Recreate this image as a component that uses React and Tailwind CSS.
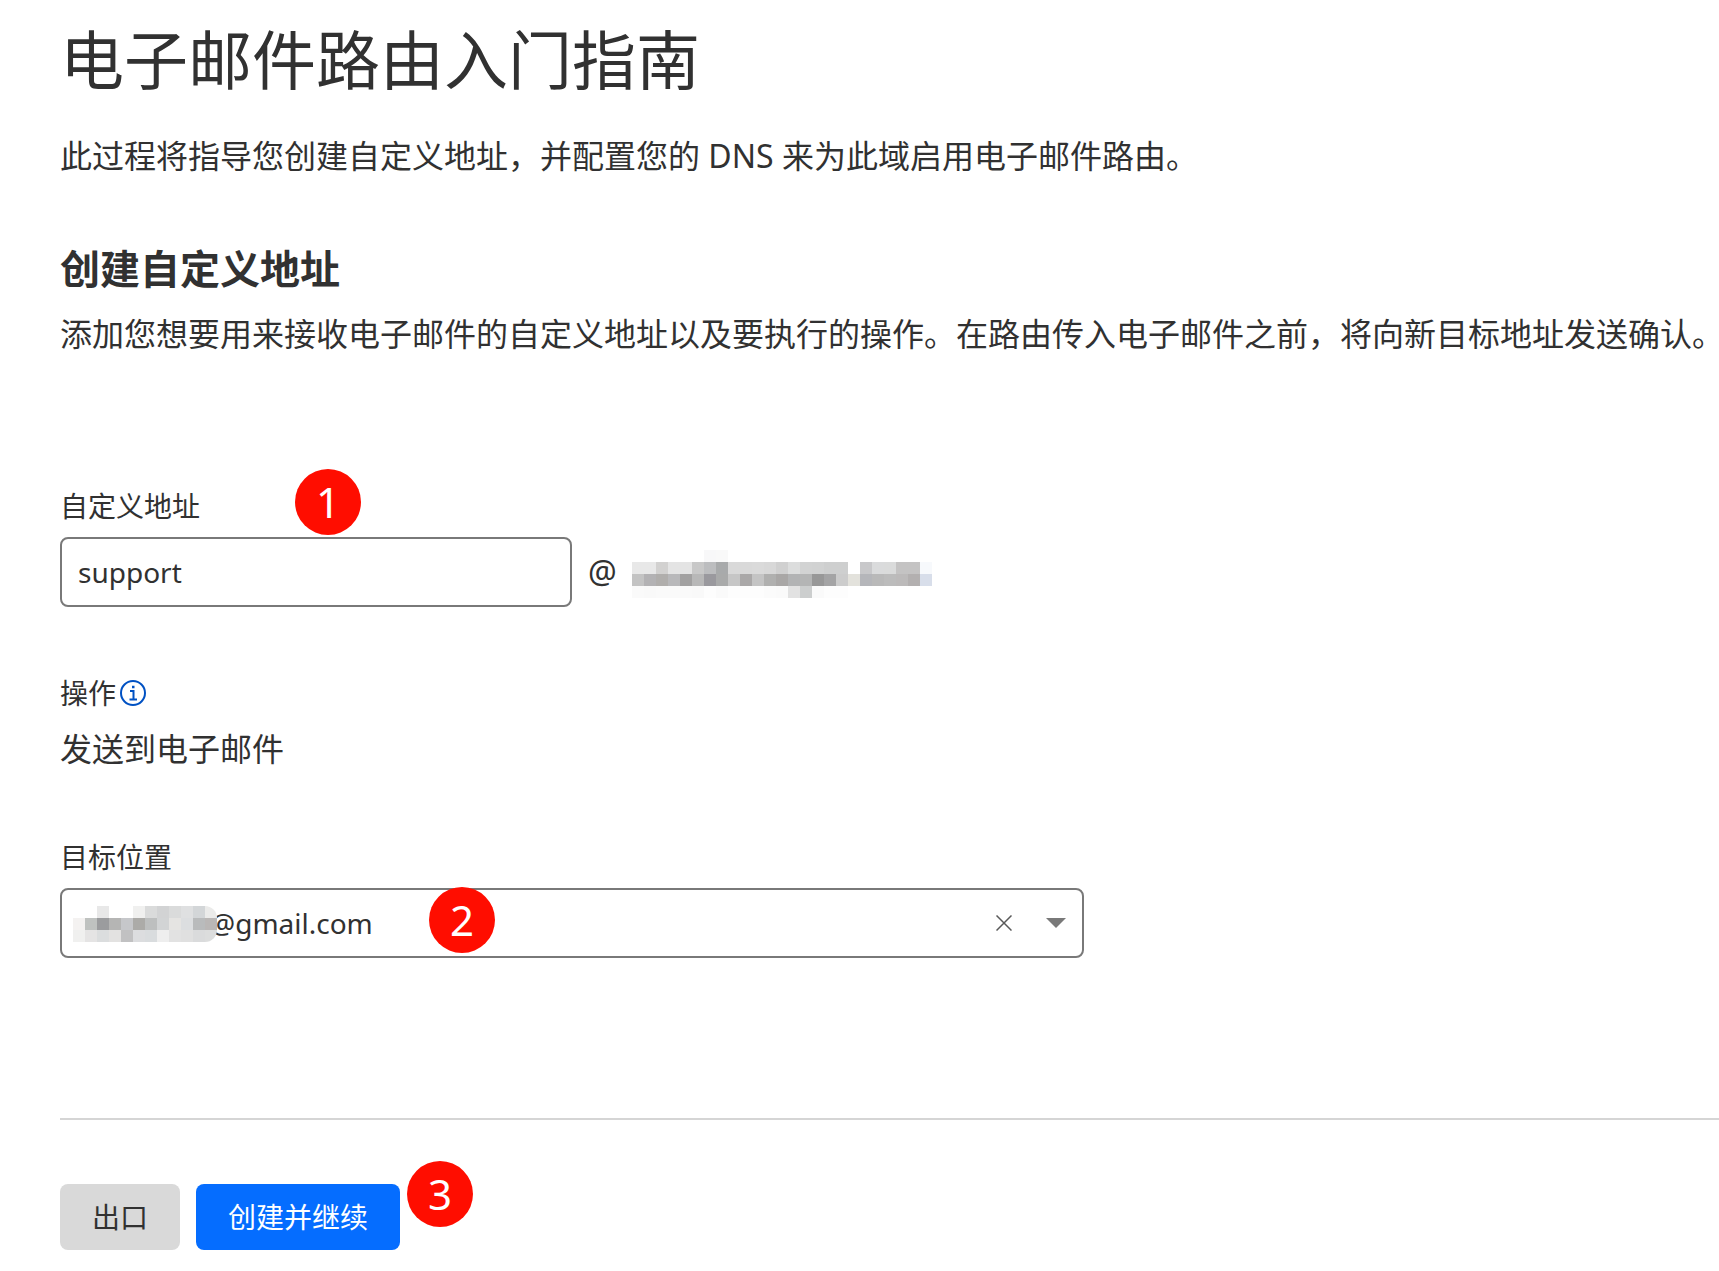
import React from "react";

const DOMAIN_MOSAIC = [
  [0, 0, 0, 0, 0, 0, "#f8f8f9", "#f9f9f9"],
  ["#e8e8e8", "#e8e8e8", "#d2d1d0", "#e4e4e4", "#e4e4e4", "#c8c8c8", "#bcbdbf", "#a8aaab", "#d9d9d9", "#d9d9d9", "#dadada", "#d8d8d8", "#d0d0d0", "#dcdddd", "#d2d3d3", "#d1d2d2", "#cecfcf", "#cecfcf", 0, "#c8c8ca", "#dadbdc", "#dadbdb", "#c4c3c3", "#c4c3c3", "#f7f9fc"],
  ["#c3c3c3", "#b3b2b4", "#b0aeac", "#b8b8ba", "#a2a1a1", "#b8b8b8", "#9a999e", "#a9aaaa", "#c6c6c6", "#aaa8a8", "#c4c4c4", "#b0b0af", "#a9a7a6", "#b2b3b4", "#b4b5b5", "#989898", "#a4a4a5", "#cccccc", "#e3e2dc", "#b5b6ba", "#b9b9b9", "#bcbcbc", "#bcbaba", "#b3b0b0", "#d8deea"],
  ["#fafafa", "#f9f9f9", "#fafafa", "#fafafa", "#fafafa", "#f9f9f9", "#fdfdfd", "#fafafa", "#fdfdfd", "#fdfdfd", "#fdfdfd", "#fbfbfb", "#fafafa", "#e2e2e2", "#cccece", "#fafafa", "#fdfdfd", "#fdfdfd"],
];

const NAME_MOSAIC = [
  [0, 0, "#e8e8e8", 0, 0, "#f0f0ef", "#dadbdb", "#d2d3d4", "#dadbdb", "#dfe0e1", "#d3d6d8", "#ebebea"],
  ["#f4f2f1", "#bfc2c0", "#9b9c9e", "#b5b5b4", "#c6c7ca", "#acaba8", "#bdbfbf", "#d2d4d5", "#e5e4e2", "#dcdee0", "#b9bbbc", "#bab7b6"],
  ["#f0f0ef", "#e5e4e4", "#dbddde", "#e3e2e1", "#c1c1c2", "#dcdddf", "#d9dcde", "#eeeeee", "#e2e2e2", "#e0e0e0", "#dadbdc", "#dcdddd"],
];

function Mosaic({ rows, columns, label, className }) {
  return (
    <svg role="img" aria-label={label} className={className} width={columns * 12} height={rows.length * 12} shapeRendering="crispEdges">
      {rows.map((row, y) =>
        row.map((fill, x) => (fill ? <rect key={`${x}-${y}`} x={x * 12} y={y * 12} width="12" height="12" fill={fill} /> : null))
      )}
    </svg>
  );
}

function Step({ children, className }) {
  return (
    <span className={`absolute flex size-[66px] items-center justify-center rounded-full bg-[#ff0d00] text-[42px] leading-none text-white ${className}`}>
      {children}
    </span>
  );
}

export default function App() {
  return (
    <main className="bg-white pt-4 pb-5 pl-[60px] font-['Noto_Sans','Noto_Sans_CJK_SC',sans-serif] text-[32px] leading-[48px] text-[#313131]">
      <h1 className="text-[64px] leading-[88px]">电子邮件路由入门指南</h1>
      <p className="mt-7">此过程将指导您创建自定义地址，并配置您的 DNS 来为此域启用电子邮件路由。</p>

      <h2 className="mt-[61px] text-[40px] leading-[56px] font-bold">创建自定义地址</h2>
      <p className="mt-[13px] whitespace-nowrap">添加您想要用来接收电子邮件的自定义地址以及要执行的操作。在路由传入电子邮件之前，将向新目标地址发送确认。</p>

      <form onSubmit={(e) => e.preventDefault()}>
        <div className="relative mt-[127px]">
          <label htmlFor="local-part" className="block text-[28px] leading-[42px]">自定义地址</label>
          <div className="mt-[10px] flex items-center">
            <input
              id="local-part"
              defaultValue="support"
              className="h-[70px] w-[512px] rounded-lg border-2 border-[#797979] bg-white px-4 text-[28px] outline-none"
            />
            <span className="ml-4 text-[32px]">@</span>
            <Mosaic rows={DOMAIN_MOSAIC} columns={25} label="域名" className="mt-1 ml-[15px]" />
          </div>
          <Step className="-top-4 left-[235px]">1</Step>
        </div>

        <section className="mt-[65px]">
          <h3 className="flex items-center gap-1 text-[28px] leading-[42px]">
            操作
            <button type="button" aria-label="操作说明">
              <svg className="size-[26px]" viewBox="0 0 26 26" fill="none" stroke="#0051c3" strokeWidth="2">
                <circle cx="13" cy="13" r="12" />
                <path d="M10 11h3.5v8M9.5 19.5h7.5" />
                <path d="M12 7h2.5" strokeWidth="2.5" />
              </svg>
            </button>
          </h3>
          <p className="mt-[11px]">发送到电子邮件</p>
        </section>

        <div className="mt-[63px]">
          <label htmlFor="destination" className="block text-[28px] leading-[42px]">目标位置</label>
          <div className="relative mt-[10px] w-[1024px] max-w-full">
            <select
              id="destination"
              className="block h-[70px] w-full appearance-none rounded-lg border-2 border-[#797979] bg-white pl-[148px] text-[28px] outline-none"
            >
              <option>@gmail.com</option>
            </select>
            <Mosaic rows={NAME_MOSAIC} columns={12} label="邮箱用户名" className="pointer-events-none absolute top-[18px] left-[13px] rounded-r-xl" />
            <button type="button" aria-label="清除" className="absolute top-[27px] right-[72px]">
              <svg className="size-4" viewBox="0 0 16 16" stroke="#595959" strokeWidth="1.5">
                <path d="M.5.5l15 15M15.5.5l-15 15" />
              </svg>
            </button>
            <svg className="pointer-events-none absolute top-[30px] right-[18px] h-[10px] w-5" viewBox="0 0 20 10" fill="#797979">
              <path d="M0 0h20L10 10z" />
            </svg>
            <Step className="-top-px left-[369px]">2</Step>
          </div>
        </div>

        <div className="relative mt-40 flex gap-4 border-t-2 border-[#d5d5d5] pt-16 text-[28px] leading-[42px]">
          <button type="button" className="h-[66px] rounded-lg bg-[#d9d9d9] px-8">出口</button>
          <button type="submit" className="h-[66px] rounded-lg bg-[#056dff] px-8 text-white">创建并继续</button>
          <Step className="top-[41px] left-[347px]">3</Step>
        </div>
      </form>
    </main>
  );
}
